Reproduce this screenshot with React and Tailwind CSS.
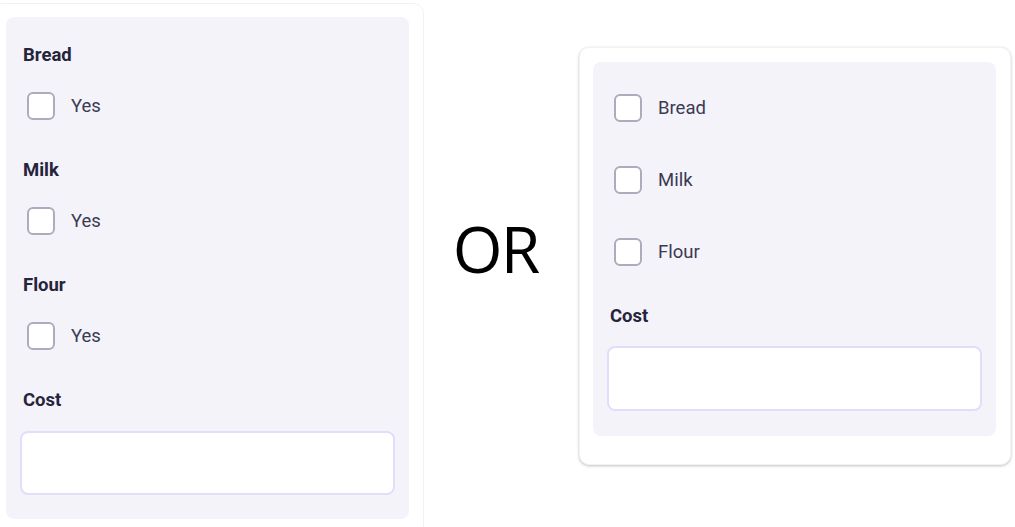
export default function App() {
  const font = { fontFamily: "Roboto, 'Noto Sans', sans-serif" };
  const Check = ({ label }) => (
    <div className="flex items-center h-[28px]">
      <div className="w-[28px] h-[28px] rounded-[6px] border-2 border-[#aeabbd] bg-white shrink-0" />
      <span className="ml-[16px] text-[18.5px] leading-[24px] text-[#3b3a52]">{label}</span>
    </div>
  );
  const Label = ({ children }) => (
    <div className="text-[18.5px] leading-[24px] font-bold text-[#25243a]">{children}</div>
  );
  return (
    <div className="w-[1015px] h-[527px] overflow-hidden bg-white flex items-start" style={font}>
      <div className="-ml-[8px] mt-[3px] w-[432px] h-[540px] shrink-0 rounded-[10px] border border-[#f2f2f4] bg-white pt-[13px] pl-[13px] pr-[14px]">
        <div className="bg-[#f4f3fa] rounded-[8px] h-[502px] pt-[26px] pl-[14px] pr-[14px]">
          {["Bread", "Milk", "Flour"].map((n) => (
            <div key={n} className="mb-[38px]">
              <div className="pl-[3px]"><Label>{n}</Label></div>
              <div className="mt-[25px] pl-[7px]"><Check label="Yes" /></div>
            </div>
          ))}
          <div className="pl-[3px]"><Label>Cost</Label></div>
          <div className="mt-[19px] h-[64px] rounded-[8px] border-2 border-[#e4dcfa] bg-white" />
        </div>
      </div>
      <div className="w-[155px] h-[527px] flex items-center justify-center shrink-0">
        <span className="text-[64px] leading-none text-black tracking-[-2px] -ml-[12px] mt-[-30px]" style={{ fontFamily: "'Open Sans', sans-serif" }}>OR</span>
      </div>
      <div className="mt-[47px] w-[432px] shrink-0 rounded-[10px] bg-white border border-[#f2f2f4] shadow-[0_1px_3px_rgba(0,0,0,0.25)] pt-[14px] pl-[13px] pr-[14px] pb-[28px]">
        <div className="bg-[#f4f3fa] rounded-[8px] pt-[32px] pb-[25px] pl-[14px] pr-[14px]">
          <div className="pl-[7px] flex flex-col gap-[44px]">
            <Check label="Bread" />
            <Check label="Milk" />
            <Check label="Flour" />
          </div>
          <div className="mt-[38px] pl-[3px]"><Label>Cost</Label></div>
          <div className="mt-[18px] h-[65px] rounded-[8px] border-2 border-[#e4dcfa] bg-white" />
        </div>
      </div>
    </div>
  );
}
